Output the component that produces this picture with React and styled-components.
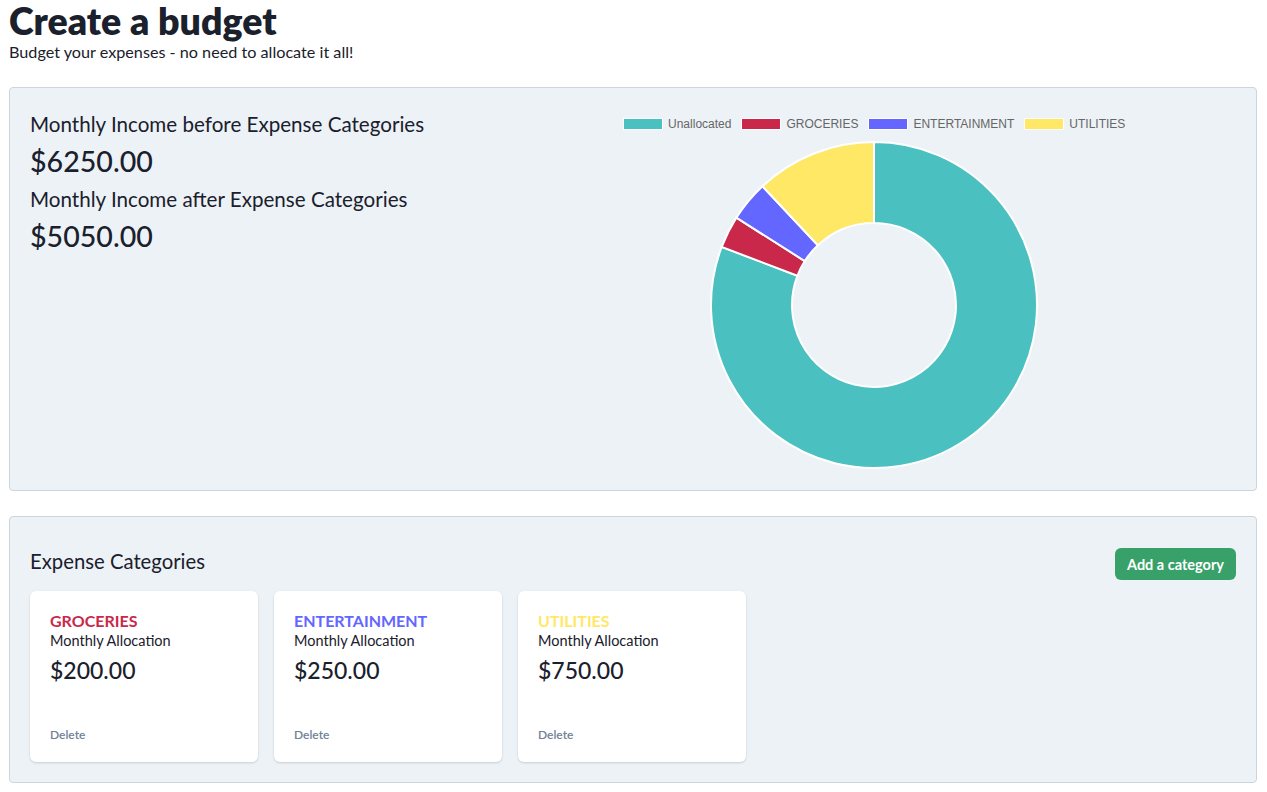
import styled, { createGlobalStyle } from 'styled-components'

const GlobalStyle = createGlobalStyle`
  body {
    margin: 0;
    font-family: "Lato", "Noto Sans", sans-serif;
    color: #1a202c;
    background: #ffffff;
  }
`

const Page = styled.div`
  padding: 0 10px 8px 9px;
`

const Title = styled.h1`
  font-size: 37.5px;
  font-weight: 800;
  margin: 0;
  line-height: 42px;
`

const Subtitle = styled.p`
  font-size: 16.2px;
  margin: 0 0 25px;
  line-height: 20px;
`

const Panel = styled.section`
  background: #edf2f7;
  border: 1px solid #cbd5e0;
  border-radius: 4px;
  padding: ${(p) => p.$pad || '20px'};
  margin-bottom: 25px;
`

const Summary = styled.div`
  display: grid;
  grid-template-columns: 2fr 3fr;
`

const Income = styled.div`
  padding-top: 1px;
`

const IncomeLabel = styled.div`
  font-size: 20.6px;
  line-height: 30px;
`

const IncomeValue = styled.div`
  font-size: 28.6px;
  line-height: 45px;
  font-weight: 500;
`

const ChartArea = styled.div`
  display: flex;
  flex-direction: column;
  align-items: center;
`

const Legend = styled.div`
  display: flex;
  gap: 10px;
  height: 32px;
  align-items: center;
  font-family: "Liberation Sans", Arial, sans-serif;
  font-size: 12px;
  color: #666666;
`

const LegendItem = styled.div`
  display: flex;
  align-items: center;
  gap: 5px;
`

const Swatch = styled.span`
  width: 38px;
  height: 10px;
  background: ${(p) => p.$color};
  border: 1px solid #ffffff;
`

const HeaderRow = styled.div`
  display: flex;
  justify-content: space-between;
  align-items: flex-start;
  margin-bottom: 11px;
`

const SectionTitle = styled.h2`
  font-size: 20.3px;
  font-weight: 400;
  margin: 0;
  line-height: 26px;
`

const AddButton = styled.button`
  background: #38a169;
  color: #ffffff;
  border: none;
  border-radius: 6px;
  height: 32px;
  padding: 0 12px;
  font-family: inherit;
  font-size: 14.5px;
  font-weight: 700;
`

const Cards = styled.div`
  display: grid;
  grid-template-columns: repeat(auto-fill, 228px);
  gap: 16px;
`

const Card = styled.div`
  background: #ffffff;
  border-radius: 6px;
  box-shadow: 0 1px 3px rgba(0, 0, 0, 0.1), 0 1px 2px rgba(0, 0, 0, 0.06);
  padding: 20px 20px 20px;
  height: 171px;
  box-sizing: border-box;
  display: flex;
  flex-direction: column;
`

const CardName = styled.div`
  color: ${(p) => p.$color};
  font-size: 16px;
  font-weight: 700;
  line-height: 20px;
`

const CardLabel = styled.div`
  font-size: 14.5px;
  line-height: 20px;
`

const CardAmount = styled.div`
  font-size: 23px;
  line-height: 38px;
  font-weight: 500;
`

const DeleteLink = styled.a`
  margin-top: auto;
  font-size: 12px;
  font-weight: 600;
  color: #718096;
`

const slices = [
  { name: 'Unallocated', value: 5050, color: '#4bc0c0' },
  { name: 'GROCERIES', value: 200, color: '#c9284a' },
  { name: 'ENTERTAINMENT', value: 250, color: '#6366ff' },
  { name: 'UTILITIES', value: 750, color: '#ffe866' },
]

const categories = [
  { name: 'GROCERIES', amount: '$200.00', color: '#c9284a' },
  { name: 'ENTERTAINMENT', amount: '$250.00', color: '#6366ff' },
  { name: 'UTILITIES', amount: '$750.00', color: '#ffe866' },
]

function arcPath(cx, cy, r1, r2, a0, a1) {
  const pt = (r, a) => [cx + r * Math.sin(a), cy - r * Math.cos(a)]
  const large = a1 - a0 > Math.PI ? 1 : 0
  const [x0, y0] = pt(r2, a0)
  const [x1, y1] = pt(r2, a1)
  const [x2, y2] = pt(r1, a1)
  const [x3, y3] = pt(r1, a0)
  return `M${x0} ${y0} A${r2} ${r2} 0 ${large} 1 ${x1} ${y1} L${x2} ${y2} A${r1} ${r1} 0 ${large} 0 ${x3} ${y3} Z`
}

function Donut() {
  const total = slices.reduce((s, d) => s + d.value, 0)
  let angle = 0
  return (
    <svg width="330" height="330" viewBox="0 0 330 330">
      {slices.map((d) => {
        const a0 = angle
        angle += (d.value / total) * Math.PI * 2
        return (
          <path
            key={d.name}
            d={arcPath(165, 165, 82, 163, a0, angle)}
            fill={d.color}
            stroke="#ffffff"
            strokeWidth="2"
          />
        )
      })}
    </svg>
  )
}

export default function App() {
  return (
    <Page>
      <GlobalStyle />
      <Title>Create a budget</Title>
      <Subtitle>Budget your expenses - no need to allocate it all!</Subtitle>

      <Panel>
        <Summary>
          <Income>
            <IncomeLabel>Monthly Income before Expense Categories</IncomeLabel>
            <IncomeValue>$6250.00</IncomeValue>
            <IncomeLabel>Monthly Income after Expense Categories</IncomeLabel>
            <IncomeValue>$5050.00</IncomeValue>
          </Income>
          <ChartArea>
            <Legend>
              {slices.map((d) => (
                <LegendItem key={d.name}>
                  <Swatch $color={d.color} />
                  {d.name}
                </LegendItem>
              ))}
            </Legend>
            <Donut />
          </ChartArea>
        </Summary>
      </Panel>

      <Panel $pad="31px 20px 20px">
        <HeaderRow>
          <SectionTitle>Expense Categories</SectionTitle>
          <AddButton>Add a category</AddButton>
        </HeaderRow>
        <Cards>
          {categories.map((c) => (
            <Card key={c.name}>
              <CardName $color={c.color}>{c.name}</CardName>
              <CardLabel>Monthly Allocation</CardLabel>
              <CardAmount>{c.amount}</CardAmount>
              <DeleteLink>Delete</DeleteLink>
            </Card>
          ))}
        </Cards>
      </Panel>
    </Page>
  )
}
